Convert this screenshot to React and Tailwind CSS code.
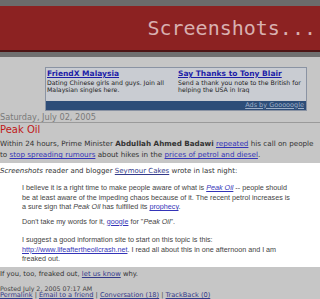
export default function App() {
  const sans = { fontFamily: '"DejaVu Sans", Verdana, sans-serif' };
  const arial = { fontFamily: '"Liberation Sans", Arial, sans-serif' };

  return (
    <div className="w-[320px] h-[299px] overflow-hidden bg-[#c6c6c6]" style={sans}>
      {/* header */}
      <div className="h-[6px] bg-[#6b6b6b]" />
      <div className="h-[46px] bg-[#8c2222] border-b-2 border-[#4d1515] flex items-center justify-end pr-[4px]">
        <span className="text-[20px] text-[#d8b0b0]" style={{ fontFamily: '"DejaVu Sans Mono", monospace' }}>
          Screenshots...
        </span>
      </div>
      <div className="h-[5px] bg-[#707070]" />

      {/* ads */}
      <div className="pt-[10px] pl-[45px] pr-[13px]">
        <div className="border border-[#8a93a3] bg-[#c9ccd2]">
          <div className="grid grid-cols-[131px_1fr] px-[1px] pt-[1px] pb-[8px] text-[6.2px] leading-[7px] text-[#222] whitespace-nowrap">
            <div>
              <div className="font-bold text-[#1d1da8] underline text-[7.5px] leading-[10px]">FriendX Malaysia</div>
              <div>Dating Chinese girls and guys. Join all</div>
              <div>Malaysian singles here.</div>
            </div>
            <div>
              <div className="font-bold text-[#1d1da8] underline text-[7.5px] leading-[10px]">Say Thanks to Tony Blair</div>
              <div>Send a thank you note to the British for</div>
              <div>helping the USA in Iraq</div>
            </div>
          </div>
          <div className="h-[9px] bg-[#2d4d78] flex items-center justify-end pr-[2px]">
            <span className="text-[6.5px] text-[#9fb0c8] underline">Ads by Gooooogle</span>
          </div>
        </div>
      </div>

      {/* post */}
      <div className="mt-[1px] border-b border-[#9a9a9a] text-[8.2px] leading-[10px] text-[#7a7a7a]">
        Saturday, July 02, 2005
      </div>
      <div className="text-[10px] leading-[14px] text-[#c01818]">Peak Oil</div>
      <div className="text-[7.2px] leading-[11px] text-[#333] pt-[1px] pb-[3px] whitespace-nowrap">
        Within 24 hours, Prime Minister <b>Abdullah Ahmed Badawi</b>{' '}
        <span className="text-[#3434b8] underline">repeated</span> his call on people
        <br />
        to <span className="text-[#3434b8] underline">stop spreading rumours</span> about hikes in the{' '}
        <span className="text-[#3434b8] underline">prices of petrol and diesel</span>.
      </div>

      <div className="bg-white pt-[3px] pb-[3px]">
        <div className="text-[7px] leading-[11px] text-[#333]">
          <i>Screenshots</i> reader and blogger{' '}
          <span className="text-[#333a8a] underline">Seymour Cakes</span> wrote in last night:
        </div>
        <div className="pl-[22px] pt-[6px] text-[7.2px] leading-[9.5px] text-[#444] whitespace-nowrap" style={arial}>
          <p>
            I believe it is a right time to make people aware of what is{' '}
            <i className="text-[#3434b8] underline">Peak Oil</i> -- people should
            <br />
            be at least aware of the impeding chaos because of it. The recent petrol increases is
            <br />
            a sure sign that <i>Peak Oil</i> has fulfilled its{' '}
            <span className="text-[#3434b8] underline">prophecy</span>.
          </p>
          <p className="mt-[5px]">
            Don't take my words for it, <span className="text-[#3434b8] underline">google</span> for "<i>Peak Oil</i>".
          </p>
          <p className="mt-[9px]">
            I suggest a good information site to start on this topic is this:
            <br />
            <span className="text-[#3434b8] underline">http://www.lifeaftertheoilcrash.net</span>. I read all about this in one afternoon and I am
            <br />
            freaked out.
          </p>
        </div>
      </div>

      <div className="text-[6.8px] leading-[11px] text-[#333] pt-[2px]">
        If you, too, freaked out, <span className="text-[#333a8a] underline">let us know</span> why.
      </div>
      <div className="pt-[5px] leading-[7px] text-[#444] whitespace-nowrap">
        <div className="text-[6.3px]">Posted July 2, 2005 07:17 AM</div>
        <div className="text-[6.6px]">
          <span className="text-[#333a8a] underline">Permalink</span> | <span className="text-[#333a8a] underline">Email to a friend</span> | <span className="text-[#333a8a] underline">Conversation (18)</span> | <span className="text-[#333a8a] underline">TrackBack (0)</span>
        </div>
      </div>
    </div>
  );
}
